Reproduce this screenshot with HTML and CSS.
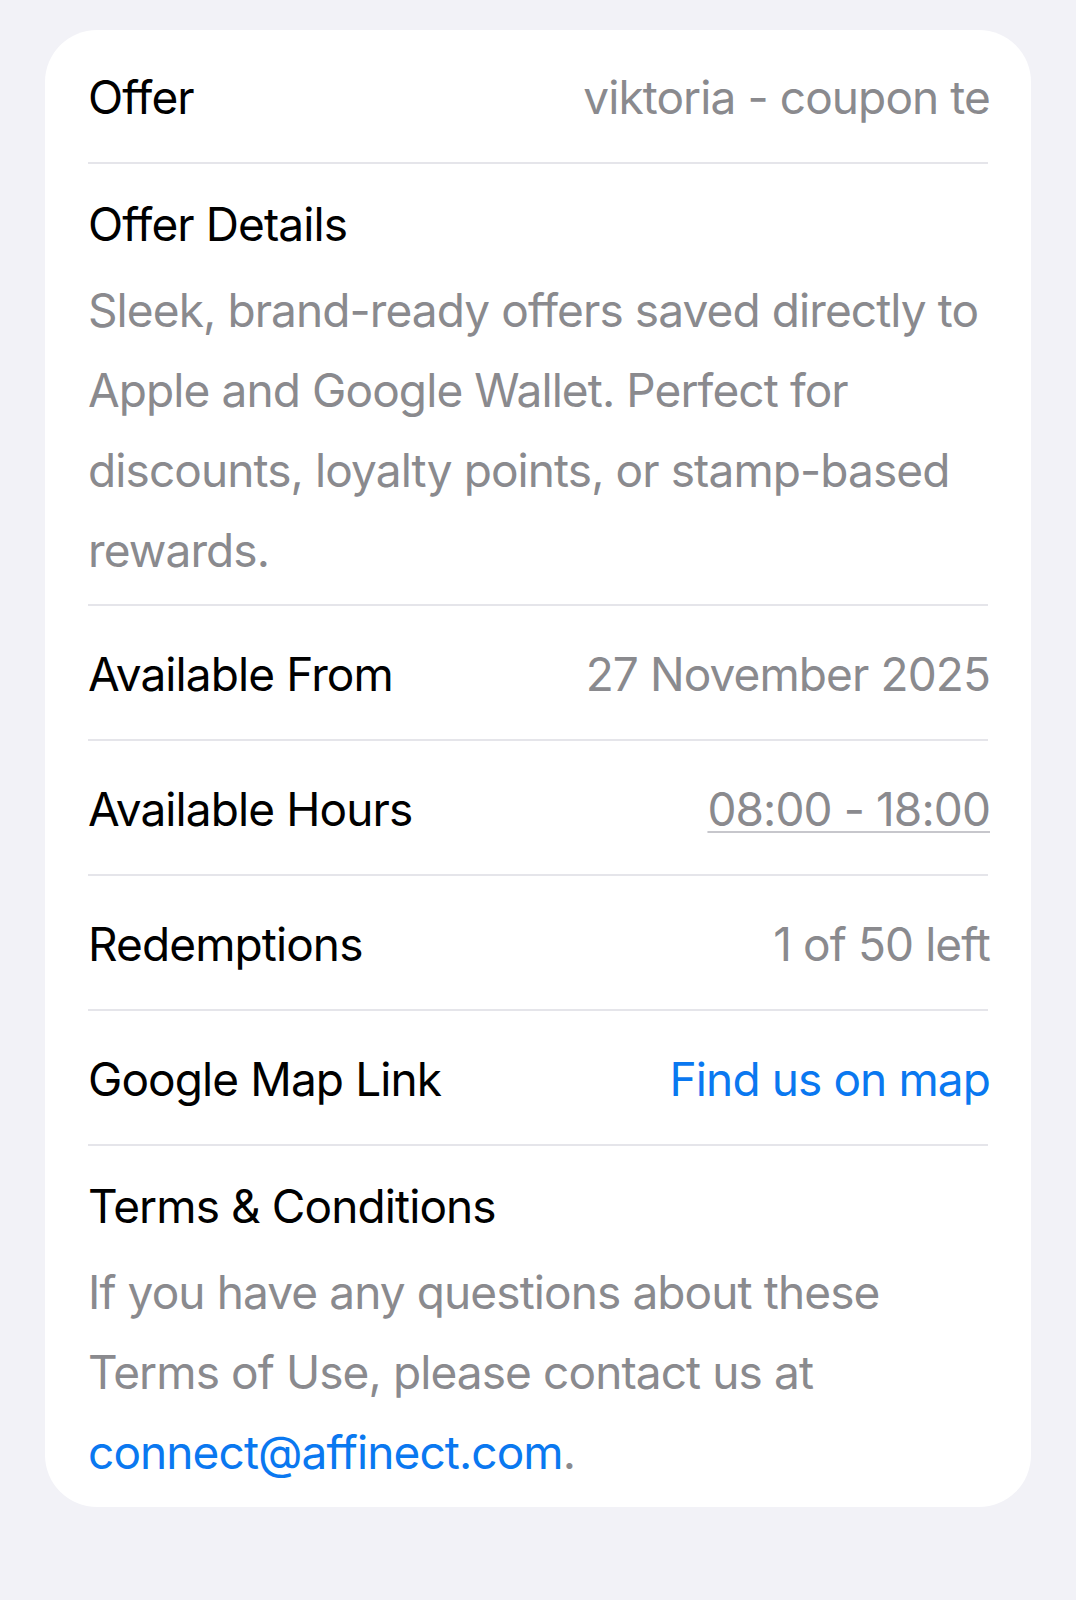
FILE: index.html
```html
<!DOCTYPE html>
<html lang="en">
<head>
<meta charset="utf-8">
<title>Offer</title>
<link rel="stylesheet" href="styles.css">
</head>
<body>
<main class="page">
  <section class="card">
    <div class="row row-first">
      <span class="label">Offer</span>
      <span class="value">viktoria - coupon te</span>
    </div>
    <div class="block">
      <div class="label">Offer Details</div>
      <p class="body">Sleek, brand-ready offers saved directly to Apple and Google Wallet. Perfect for discounts, loyalty points, or stamp-based rewards.</p>
    </div>
    <div class="row">
      <span class="label">Available From</span>
      <span class="value">27 November 2025</span>
    </div>
    <div class="row">
      <span class="label">Available Hours</span>
      <span class="value value-under">08:00 - 18:00</span>
    </div>
    <div class="row">
      <span class="label">Redemptions</span>
      <span class="value">1 of 50 left</span>
    </div>
    <div class="row">
      <span class="label">Google Map Link</span>
      <a class="value link" href="#">Find us on map</a>
    </div>
    <div class="block block-last">
      <div class="label">Terms &amp; Conditions</div>
      <p class="body">If you have any questions about these Terms of Use, please contact us at <a class="link" href="#">connect@affinect.com</a>.</p>
    </div>
  </section>
</main>
</body>
</html>
```

FILE: styles.css
```css
html, body {
  margin: 0;
  padding: 0;
  background: #f2f2f7;
}

body {
  font-family: Inter, "Noto Sans", "Liberation Sans", sans-serif;
  font-size: 46px;
  line-height: 56px;
  letter-spacing: -0.9px;
  color: #000;
  -webkit-font-smoothing: antialiased;
}

.page {
  padding: 30px 45px 92px 45px;
}

.card {
  background: #fff;
  border-radius: 52px;
  padding: 0 43px;
}

.row {
  display: flex;
  justify-content: space-between;
  align-items: flex-start;
  padding: 40px 0 37px 0;
  border-bottom: 2px solid #e5e5ea;
  white-space: nowrap;
}

.row-first {
  padding-top: 39px;
  padding-bottom: 37px;
}

.label {
  color: #000;
}

.value {
  color: #8a8a8e;
  margin-right: -2px;
}

.value-under {
  text-decoration: underline;
  text-decoration-color: #c7c7cc;
  text-decoration-thickness: 2px;
  text-underline-offset: 5px;
}

.link {
  color: #0a78f0;
  text-decoration: none;
}

.block {
  padding: 32px 0 14px 0;
  border-bottom: 2px solid #e5e5ea;
}

.block-last {
  border-bottom: none;
  padding-bottom: 15px;
}

.body {
  margin: 18px 0 0 0;
  line-height: 80px;
  color: #8a8a8e;
}
```
